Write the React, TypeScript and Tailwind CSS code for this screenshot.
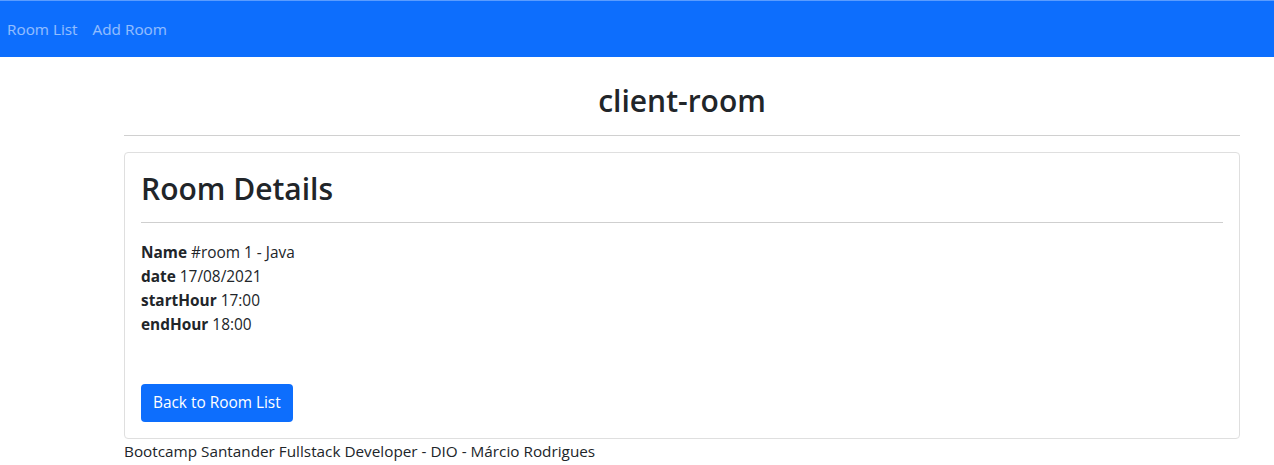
export default function App() {
  const details = [
    { label: "Name", value: "#room 1 - Java" },
    { label: "date", value: "17/08/2021" },
    { label: "startHour", value: "17:00" },
    { label: "endHour", value: "18:00" },
  ];

  return (
    <div className="min-h-screen bg-white text-[#212529] font-['Open_Sans',sans-serif]">
      {/* Navbar */}
      <nav className="h-[57px] bg-[#0d6efd] border-t border-[#5a9cff] flex items-center px-[7px]">
        <a href="#" className="text-[15.3px] text-white/55 mr-[15px]">Room List</a>
        <a href="#" className="text-[15.3px] text-white/55">Add Room</a>
      </nav>

      <div className="ml-[124px] w-[1116px]">
        <h2 className="text-center text-[30px] font-semibold leading-[1.2] pt-[26px] pb-[16px]">client-room</h2>
        <hr className="border-t border-[#d0d0d0]" />

        <div className="mt-[16px] border border-[#dfdfdf] rounded-[4px] px-[16px] pt-[18px] pb-[16px]">
          <h1 className="text-[30px] font-semibold leading-[36px]">Room Details</h1>
          <hr className="mt-[15px] border-t border-[#cfcfcf]" />
          <div className="mt-[18px] text-[15.4px] leading-[24px]">
            {details.map((d) => (
              <div key={d.label}>
                <b className="font-bold">{d.label}</b> {d.value}
              </div>
            ))}
          </div>
          <button className="mt-[47px] h-[38px] px-[12px] rounded-[4px] bg-[#0d6efd] text-white text-[15.4px]">
            Back to Room List
          </button>
        </div>
        <p className="text-[15.3px] leading-[24px]">Bootcamp Santander Fullstack Developer - DIO - Márcio Rodrigues</p>
      </div>
    </div>
  );
}
